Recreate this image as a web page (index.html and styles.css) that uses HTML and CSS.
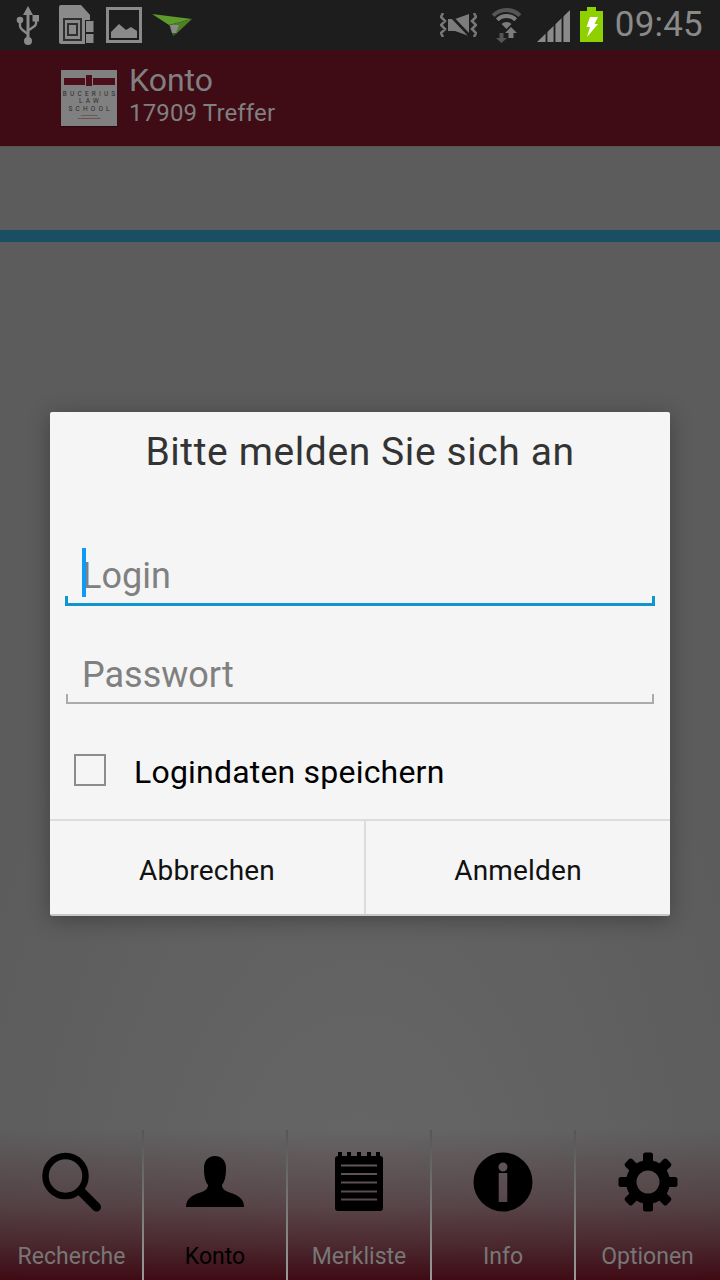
FILE: index.html
```html
<!DOCTYPE html>
<html lang="de">

<head>
    <meta charset="UTF-8">
    <meta name="viewport" content="width=device-width, initial-scale=1.0">
    <title>Konto</title>
    <link rel="stylesheet" href="styles.css">
</head>

<body>
    <div class="page">
        <!-- status bar -->
        <div class="status">
            <svg class="st-usb" width="24" height="40" viewBox="0 0 24 40" fill="#8a8a8a">
                <path d="M12 1 L17 10 H13.5 V33 H10.5 V10 H7 Z" />
                <circle cx="12" cy="36" r="4" />
                <circle cx="4" cy="15" r="3.3" />
                <rect x="16.5" y="10" width="6.5" height="6.5" />
                <path d="M4 17 V21 Q4 23 6 24.5 L11 28.5" fill="none" stroke="#8a8a8a" stroke-width="2.4" />
                <path d="M20 16 V18.5 Q20 20 18 21.5 L13 25" fill="none" stroke="#8a8a8a" stroke-width="2.4" />
            </svg>
            <svg class="st-sd" width="35" height="39" viewBox="0 0 35 39" fill="#8a8a8a">
                <path d="M2 0 H22 L31 10 V15 H26 V39 H2 Q0 39 0 37 V2 Q0 0 2 0 Z" />
                <rect x="27" y="16" width="7.5" height="11" />
                <rect x="27" y="29" width="7.5" height="9" />
                <rect x="4" y="13" width="19" height="23" fill="#2f2f2f" />
                <rect x="6" y="15" width="15" height="19" fill="#8a8a8a" />
                <rect x="8" y="18" width="11" height="13" fill="#2f2f2f" />
                <rect x="10" y="20" width="7" height="9" fill="#8a8a8a" />
            </svg>
            <svg class="st-pic" width="36" height="36" viewBox="0 0 36 36">
                <rect x="1.5" y="1.5" width="33" height="33" fill="none" stroke="#8a8a8a" stroke-width="3" />
                <path d="M5 31 V25 L13 17 L20 23 L25 20 L31 24 V31 Z" fill="#8a8a8a" />
            </svg>
            <svg class="st-plane" width="40" height="24" viewBox="0 0 40 24">
                <path d="M0 0 L40 5 L17 11 Z" fill="#5f9a2c" />
                <path d="M17 11 L40 5 L24 20 Z" fill="#4d7f24" />
                <path d="M17 11 L21 22 L24 20 Z" fill="#39601b" />
                <path d="M18 11 H27 L24 19 H20 Z" fill="#8a8a8a" />
            </svg>
            <div class="status-right">
                <svg class="st-mute" width="37" height="24" viewBox="0 0 37 24" fill="none">
                    <path d="M3 0 L1 4 L5 8 L1 12 L5 16 L1 20 L3 24 M34 0 L36 4 L32 8 L36 12 L32 16 L36 20 L34 24" stroke="#777" stroke-width="2.6" />
                    <path d="M8 6 H15 L29 1 V23 L15 18 H8 Z" fill="#7c7c7c" />
                    <path d="M9 1 L30 23" stroke="#1d1d1d" stroke-width="2.6" />
                </svg>
                <svg class="st-wifi" width="33" height="36" viewBox="0 0 33 36" fill="none">
                    <path d="M3.1 8.6 A19 19 0 0 1 29.9 8.6" stroke="#555" stroke-width="4" />
                    <path d="M7.3 12.8 A13 13 0 0 1 25.7 12.8" stroke="#7c7c7c" stroke-width="4" />
                    <path d="M16.5 22 L11.5 17 A7 7 0 0 1 21.5 17 Z" fill="#7c7c7c" />
                    <path d="M9.5 26 H13.5 V31 H17 L11.5 36 L6 31 H9.5 Z" fill="#555" />
                    <path d="M21 20 L27 26 H23.5 V31 H18.5 V26 H15 Z" fill="#7c7c7c" />
                </svg>
                <svg class="st-signal" width="33" height="32" viewBox="0 0 33 32">
                    <path d="M0 32 L33 0 V32 Z" fill="#8a8a8a" />
                    <path d="M9.5 32 V20 M17.5 32 V12 M25.5 32 V4" stroke="#1d1d1d" stroke-width="1.8" />
                </svg>
                <svg class="st-batt" width="23" height="35" viewBox="0 0 23 35">
                    <path d="M7 0 H16 V4 H23 V35 H0 V4 H7 Z" fill="#8fd000" />
                    <path d="M10 10 H18 L14.5 17 H18 L7 30 L10 20 H6.5 Z" fill="#fff" />
                </svg>
                <span class="time">09:45</span>
            </div>
        </div>

        <!-- action bar -->
        <div class="actionbar">
            <div class="logo">
                <div class="logo-bars"><i class="bar"></i><i class="knot"></i><i class="bar"></i></div>
                <div class="logo-name">BUCERIUS</div>
                <div class="logo-name">LAW</div>
                <div class="logo-name">SCHOOL</div>
                <div class="logo-sub">Hochschule für<br>Rechtswissenschaft</div>
            </div>
            <div class="titles">
                <div class="title">Konto</div>
                <div class="subtitle">17909 Treffer</div>
            </div>
        </div>

        <div class="content">
            <div class="blue"></div>
        </div>

        <!-- tabs -->
        <div class="tabs">
            <div class="tab">
                <svg class="tab-icon" viewBox="0 0 60 60" fill="none" stroke="#000">
                    <circle cx="23.5" cy="24" r="20" stroke-width="6.5" />
                    <path d="M40 40.5 L54.5 55" stroke-width="9" stroke-linecap="round" />
                </svg>
                <span class="tab-label">Recherche</span>
            </div>
            <div class="tab">
                <svg class="tab-icon" viewBox="0 0 60 60">
                    <path d="M1 55 C1 46 8 43 14 41 C20 39 23 37 23 33 C20 29 19 24 19 16 C19 8 24 4 30 4 C36 4 41 8 41 16 C41 24 40 29 37 33 C37 37 40 39 46 41 C52 43 59 46 59 55 Z" />
                </svg>
                <span class="tab-label active">Konto</span>
            </div>
            <div class="tab">
                <svg class="tab-icon" viewBox="0 0 60 60">
                    <path fill-rule="evenodd" d="M9 4 H51 Q54 4 54 7 V56 Q54 59 51 59 H9 Q6 59 6 56 V7 Q6 4 9 4 Z M12 12.5 V14.5 H48 V12.5 Z M12 21 V23 H48 V21 Z M12 29.5 V31.5 H48 V29.5 Z M12 38.5 V40.5 H48 V38.5 Z M12 46.5 V48.5 H48 V46.5 Z" />
                    <path d="M9 0 H13 V5 H9 Z M18 0 H22 V5 H18 Z M28 0 H32 V5 H28 Z M38 0 H42 V5 H38 Z M47 0 H51 V5 H47 Z" />
                </svg>
                <span class="tab-label">Merkliste</span>
            </div>
            <div class="tab">
                <svg class="tab-icon" viewBox="0 0 60 60">
                    <path fill-rule="evenodd" d="M30 0.5 A29.5 29.5 0 1 0 30 59.5 A29.5 29.5 0 1 0 30 0.5 Z M30 10.5 A4.5 4.5 0 1 0 30 19.5 A4.5 4.5 0 1 0 30 10.5 Z M25.7 21 V50 H34.3 V21 Z" />
                </svg>
                <span class="tab-label">Info</span>
            </div>
            <div class="tab">
                <svg class="tab-icon" viewBox="0 0 60 60">
                    <path fill-rule="evenodd" d="M30 8 A22 22 0 1 0 30 52 A22 22 0 1 0 30 8 Z M30 18.5 A11.5 11.5 0 1 1 30 41.5 A11.5 11.5 0 1 1 30 18.5 Z" />
                    <rect x="25" y="0.5" width="10" height="12" rx="2.5" />
                    <rect x="25" y="0.5" width="10" height="12" rx="2.5" transform="rotate(45 30 30)" />
                    <rect x="25" y="0.5" width="10" height="12" rx="2.5" transform="rotate(90 30 30)" />
                    <rect x="25" y="0.5" width="10" height="12" rx="2.5" transform="rotate(135 30 30)" />
                    <rect x="25" y="0.5" width="10" height="12" rx="2.5" transform="rotate(180 30 30)" />
                    <rect x="25" y="0.5" width="10" height="12" rx="2.5" transform="rotate(225 30 30)" />
                    <rect x="25" y="0.5" width="10" height="12" rx="2.5" transform="rotate(270 30 30)" />
                    <rect x="25" y="0.5" width="10" height="12" rx="2.5" transform="rotate(315 30 30)" />
                </svg>
                <span class="tab-label">Optionen</span>
            </div>
        </div>

        <!-- login dialog -->
        <div class="overlay">
            <div class="dialog">
                <div class="dialog-title">Bitte melden Sie sich an</div>
                <div class="field focus">
                    <i class="caret"></i>
                    <span class="hint">Login</span>
                    <div class="line"></div>
                </div>
                <div class="field">
                    <span class="hint">Passwort</span>
                    <div class="line"></div>
                </div>
                <div class="check-row">
                    <span class="checkbox"></span>
                    <span class="check-label">Logindaten speichern</span>
                </div>
                <div class="buttons">
                    <div class="btn btn-cancel">Abbrechen</div>
                    <div class="btn btn-ok">Anmelden</div>
                </div>
            </div>
        </div>
    </div>
</body>

</html>
```

FILE: styles.css
```css
* {
    box-sizing: border-box;
}

body {
    margin: 0;
    font-family: Roboto, "Liberation Sans", sans-serif;
}

.page {
    width: 720px;
    height: 1280px;
    display: flex;
    flex-direction: column;
    position: relative;
    overflow: hidden;
    background: radial-gradient(ellipse 430px 760px at 50% 100%, #676767, #5c5c5c);
}

/* status bar */
.status {
    height: 50px;
    background-color: #1d1d1d;
    display: flex;
    align-items: flex-start;
    padding-left: 16px;
}

.st-usb {
    margin-top: 5px;
}

.st-sd {
    margin: 5px 0 0 19px;
}

.st-pic {
    margin: 7px 0 0 12px;
}

.st-plane {
    margin: 14px 0 0 10px;
}

.status-right {
    margin-left: auto;
    display: flex;
    align-items: flex-start;
    padding-right: 17px;
}

.st-mute {
    margin-top: 13px;
}

.st-wifi {
    margin: 7px 0 0 13px;
}

.st-signal {
    margin: 10px 0 0 14px;
}

.st-batt {
    margin: 7px 0 0 10px;
}

.time {
    margin-left: 12px;
    font-size: 35px;
    letter-spacing: 0.2px;
    line-height: 50px;
    color: #8a8a8a;
}

/* action bar */
.actionbar {
    height: 97px;
    background-color: #3f0b15;
    border-bottom: 1px solid #555;
    display: flex;
    align-items: flex-start;
    padding: 20px 0 0 61px;
}

.logo {
    width: 56px;
    height: 56px;
    background-color: #808080;
    display: flex;
    flex-direction: column;
    align-items: center;
    padding-top: 5px;
    box-shadow: 0 1px 1px #2a070e;
}

.logo-bars {
    display: flex;
    width: 51px;
    gap: 1px;
    margin-bottom: 4.5px;
}

.logo-bars .bar {
    flex: 1;
    height: 7px;
    margin-top: 3px;
    background-color: #4b0e1a;
}

.logo-bars .knot {
    width: 6px;
    height: 11px;
    background-color: #4b0e1a;
}

.logo-name {
    font-size: 6.5px;
    line-height: 7.5px;
    letter-spacing: 3.2px;
    padding-left: 3.2px;
    color: #2c2c2c;
}

.logo-sub {
    font-size: 2.5px;
    line-height: 2.5px;
    margin-top: 2px;
    text-align: center;
    color: #4b0e1a;
}

.titles {
    margin-left: 12px;
    color: #808080;
}

.title {
    font-size: 32px;
    line-height: 36px;
    margin-top: -8px;
}

.subtitle {
    font-size: 24px;
    letter-spacing: 0.15px;
    line-height: 30px;
}

/* content */
.content {
    flex: 1;
    padding-top: 83px;
}

.blue {
    height: 12px;
    background-color: #1a4e63;
}

/* tabs */
.tabs {
    height: 150px;
    display: grid;
    grid-template-columns: 143px 144px 144px 144px 145px;
    background: linear-gradient(to bottom, rgba(63, 11, 21, 0), rgba(63, 11, 21, 0.35) 50%, rgba(63, 11, 21, 0.65) 75%, #3f0b15);
}

.tab {
    display: flex;
    flex-direction: column;
    align-items: center;
    padding-top: 22px;
}

.tab + .tab {
    margin-left: -1px;
    padding-right: 1px;
    border-left: 2px solid;
    border-image: linear-gradient(to bottom, #555, #9a9a9a) 1;
}

.tab-icon {
    width: 60px;
    height: 60px;
    display: block;
}

.tab-label {
    margin-top: 31px;
    font-size: 23px;
    line-height: 28px;
    color: #777;
}

.tab-label.active {
    color: #000;
}

/* dialog */
.overlay {
    position: absolute;
    top: 0;
    left: 0;
    right: 0;
    bottom: 0;
    display: flex;
    justify-content: center;
    align-items: flex-start;
    padding-top: 412px;
}

.dialog {
    width: 620px;
    height: 504px;
    background-color: #f5f5f5;
    border-bottom: 2px solid #c8c8c8;
    border-radius: 2px;
    box-shadow: 0 4px 22px rgba(0, 0, 0, 0.3);
    display: flex;
    flex-direction: column;
}

.dialog-title {
    height: 80px;
    text-align: center;
    font-size: 39px;
    letter-spacing: 0.6px;
    line-height: 80px;
    color: #333;
}

.field {
    height: 98px;
    margin: 0 16px;
    position: relative;
    display: flex;
    flex-direction: column;
    justify-content: flex-end;
}

.field.focus {
    height: 114px;
    margin: 0 15px;
}

.hint {
    padding: 0 0 0 16px;
    font-size: 36px;
    line-height: 44px;
    color: #808080;
}

.field.focus .hint {
    padding-left: 17px;
}

.line {
    height: 10px;
    margin-top: -3px;
    border: 2px solid #ababab;
    border-top: 0;
}

.field.focus .line {
    margin-top: -2px;
    border-width: 0 3px 3px;
    border-color: #0f96cc;
}

.caret {
    position: absolute;
    left: 17px;
    top: 56px;
    width: 4px;
    height: 49px;
    background-color: #0f9bf5;
}

.check-row {
    height: 115px;
    display: flex;
    align-items: center;
    padding: 17px 0 0 24px;
}

.checkbox {
    width: 32px;
    height: 32px;
    border: 2px solid #8c8c8c;
}

.check-label {
    margin: 3px 0 0 28px;
    font-size: 32px;
    letter-spacing: 0.2px;
    color: #000;
}

.buttons {
    flex: 1;
    display: grid;
    grid-template-columns: 316px 1fr;
    border-top: 2px solid #dcdcdc;
}

.btn {
    display: flex;
    align-items: center;
    justify-content: center;
    padding-top: 6px;
    font-size: 28px;
    letter-spacing: 0.2px;
    color: #111;
}

.btn-cancel {
    border-right: 2px solid #dcdcdc;
}
```
